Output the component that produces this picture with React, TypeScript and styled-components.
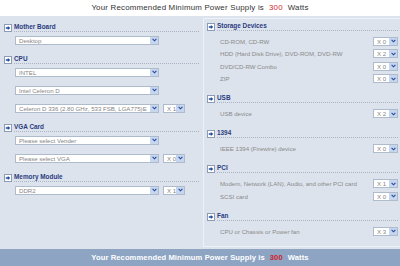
import React from 'react';
import styled, { createGlobalStyle } from 'styled-components';

const GlobalStyle = createGlobalStyle`
  html, body {
    margin: 0;
    padding: 0;
  }
  body {
    width: 400px;
    height: 266px;
    overflow: hidden;
    background: #dce3ec;
    font-family: "Liberation Sans", Arial, sans-serif;
  }
`;

const Page = styled.div`
  width: 400px;
  height: 266px;
  display: flex;
  flex-direction: column;
  background: #dce3ec;
`;

const TopBar = styled.div`
  height: 18px;
  background: #fff;
  display: flex;
  align-items: center;
  justify-content: center;
  font-size: 7.9px;
  letter-spacing: 0.2px;
  color: #333;
`;

const BottomBar = styled.div`
  height: 20px;
  background: #8ea4c3;
  display: flex;
  align-items: center;
  justify-content: center;
  font-size: 7.6px;
  font-weight: bold;
  letter-spacing: 0.1px;
  color: #fff;
`;

const Watts = styled.span`
  color: #d11f2c;
  margin: 0 5px;
`;

const Main = styled.div`
  flex: 1;
  display: flex;
  padding-bottom: 2px;
`;

const LeftCol = styled.div`
  width: 199px;
  padding: 6px 0 0 4px;
  box-sizing: border-box;
`;

const Panel = styled.div`
  width: 197px;
  margin: 2px 0 0 4px;
  padding: 2px 2px 0 3px;
  box-sizing: border-box;
  border: 1px solid #eef2f7;
  border-right: none;
`;

const Section = styled.div`
  margin-bottom: 9px;
`;

const Heading = styled.div`
  display: flex;
  align-items: flex-end;
  height: 10px;
`;

const Title = styled.div`
  flex: 1;
  margin-left: 2px;
  height: 9px;
  line-height: 9px;
  border-bottom: 1px dotted #aab4c5;
  font-size: 6.4px;
  font-weight: bold;
  color: #2b3b80;
  white-space: nowrap;
`;

const SelectList = styled.div`
  display: flex;
  flex-direction: column;
  gap: 9px;
  margin: 4px 0 0 11px;
`;

const SelectRow = styled.div`
  display: flex;
  gap: 4px;
`;

const Box = styled.div<{ $w: number }>`
  width: ${p => p.$w}px;
  height: 9px;
  box-sizing: border-box;
  border: 1px solid #aebbcd;
  background: #fff;
  display: flex;
  align-items: center;
  font-size: 6.1px;
  color: #858585;
`;

const BoxText = styled.span`
  flex: 1;
  padding-left: 3px;
  white-space: nowrap;
  overflow: hidden;
`;

const ArrowBtn = styled.span`
  width: 8px;
  height: 100%;
  background: #c7d6ef;
  display: flex;
  align-items: center;
  justify-content: center;
`;

const Items = styled.div`
  margin-top: 4.25px;
  margin-bottom: 8.25px;
`;

const Item = styled.div`
  height: 12.5px;
  display: flex;
  align-items: center;
  padding-left: 13px;
  font-size: 6.1px;
  color: #8a8a8a;
`;

const Label = styled.span`
  flex: 1;
  white-space: nowrap;
`;

const Icon = () => (
  <svg width="8" height="8" viewBox="0 0 8 8">
    <rect x="0.5" y="0.5" width="7" height="7" fill="#fff" stroke="#8d9cb6" />
    <path d="M1.8 3.2h2V1.9L6.3 4 3.8 6.1V4.8h-2z" fill="#1f4c9e" />
  </svg>
);

const Select = ({ text, w }: { text: string; w: number }) => (
  <Box $w={w}>
    <BoxText>{text}</BoxText>
    <ArrowBtn>
      <svg width="5" height="4" viewBox="0 0 5 4">
        <path d="M0.6 0.8L2.5 2.8 4.4 0.8" fill="none" stroke="#23479a" strokeWidth="1.1" />
      </svg>
    </ArrowBtn>
  </Box>
);

type PickType = { text: string; qty?: string };

const leftSections: { title: string; picks: PickType[] }[] = [
  { title: 'Mother Board', picks: [{ text: 'Desktop' }] },
  {
    title: 'CPU',
    picks: [
      { text: 'INTEL' },
      { text: 'Intel Celeron D' },
      { text: 'Celeron D 336 (2.80 GHz, 533 FSB, LGA775)E', qty: 'X 1' },
    ],
  },
  {
    title: 'VGA Card',
    picks: [{ text: 'Please select Vender' }, { text: 'Please select VGA', qty: 'X 0' }],
  },
  { title: 'Memory Module', picks: [{ text: 'DDR2', qty: 'X 1' }] },
];

const rightSections: { title: string; items: [string, string][] }[] = [
  {
    title: 'Storage Devices',
    items: [
      ['CD-ROM, CD-RW', 'X 0'],
      ['HDD (Hard Disk Drive), DVD-ROM, DVD-RW', 'X 2'],
      ['DVD/CD-RW Combo', 'X 0'],
      ['ZIP', 'X 0'],
    ],
  },
  { title: 'USB', items: [['USB device', 'X 2']] },
  { title: '1394', items: [['IEEE 1394 (Firewire) device', 'X 0']] },
  {
    title: 'PCI',
    items: [
      ['Modem, Network (LAN), Audio, and other PCI card', 'X 1'],
      ['SCSI card', 'X 0'],
    ],
  },
  { title: 'Fan', items: [['CPU or Chassis or Power fan', 'X 3']] },
];

const Message = () => (
  <>
    Your Recommended Minimum Power Supply is<Watts>300</Watts>Watts
  </>
);

export default function App() {
  return (
    <Page>
      <GlobalStyle />
      <TopBar>
        <Message />
      </TopBar>
      <Main>
        <LeftCol>
          {leftSections.map(s => (
            <Section key={s.title}>
              <Heading>
                <Icon />
                <Title>{s.title}</Title>
              </Heading>
              <SelectList>
                {s.picks.map(p => (
                  <SelectRow key={p.text}>
                    <Select text={p.text} w={144} />
                    {p.qty && <Select text={p.qty} w={22} />}
                  </SelectRow>
                ))}
              </SelectList>
            </Section>
          ))}
        </LeftCol>
        <Panel>
          {rightSections.map(s => (
            <div key={s.title}>
              <Heading>
                <Icon />
                <Title>{s.title}</Title>
              </Heading>
              <Items>
                {s.items.map(([label, qty]) => (
                  <Item key={label}>
                    <Label>{label}</Label>
                    <Select text={qty} w={25} />
                  </Item>
                ))}
              </Items>
            </div>
          ))}
        </Panel>
      </Main>
      <BottomBar>
        <Message />
      </BottomBar>
    </Page>
  );
}
